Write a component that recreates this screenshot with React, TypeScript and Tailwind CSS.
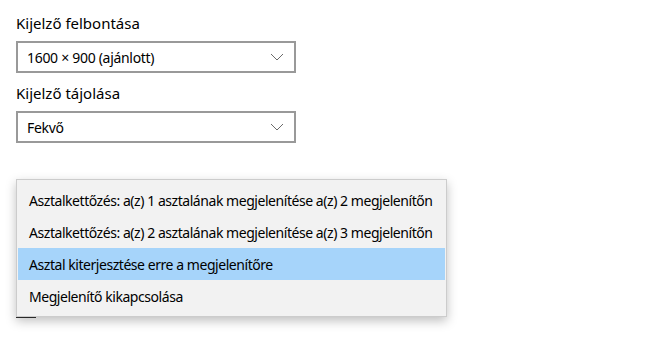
const font = { fontFamily: '"Segoe UI", "Noto Sans", "Open Sans", sans-serif' };

function Chevron() {
  return (
    <svg width="14" height="8" viewBox="0 0 14 8" className="shrink-0">
      <path d="M1 1 L7 7 L13 1" fill="none" stroke="#6b6b6b" strokeWidth="1" />
    </svg>
  );
}

function Select({ value }: { value: string }) {
  return (
    <div className="flex h-[32px] w-[280px] items-center justify-between border-2 border-[#999999] bg-white pl-[9px] pr-[10px] text-[14px] text-black">
      <span className="tracking-[-0.3px]">{value}</span>
      <Chevron />
    </div>
  );
}

const options = [
  "Asztalkettőzés: a(z) 1 asztalának megjelenítése a(z) 2 megjelenítőn",
  "Asztalkettőzés: a(z) 2 asztalának megjelenítése a(z) 3 megjelenítőn",
  "Asztal kiterjesztése erre a megjelenítőre",
  "Megjelenítő kikapcsolása",
];

export default function App() {
  return (
    <div className="relative h-[341px] w-[645px] overflow-hidden bg-white px-4 pt-[13px]" style={font}>
      <div className="text-[15px] leading-[20px] text-black">Kijelző felbontása</div>
      <div className="mt-[8px]">
        <Select value="1600 × 900 (ajánlott)" />
      </div>
      <div className="mt-[10px] text-[15px] leading-[20px] text-black">Kijelző tájolása</div>
      <div className="mt-[8px]">
        <Select value="Fekvő" />
      </div>

      <div className="absolute left-4 top-[317px] h-[1px] w-[20px] bg-[#333333]" />

      <div className="absolute left-4 top-[179px] w-[431px] border border-[#cccccc] bg-[#f2f2f2] px-[1px] py-[4px] shadow-[0_4px_10px_rgba(0,0,0,0.25)]">
        {options.map((o, i) => (
          <div
            key={o}
            className={`flex h-[32px] items-center whitespace-nowrap pl-[11px] text-[14px] tracking-[-0.45px] text-black ${i === 2 ? "bg-[#a6d4fa]" : ""}`}
          >
            {o}
          </div>
        ))}
      </div>
    </div>
  );
}
